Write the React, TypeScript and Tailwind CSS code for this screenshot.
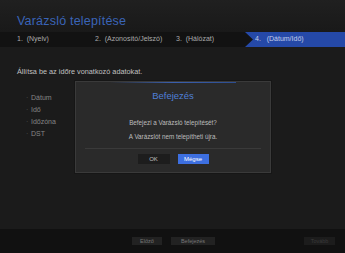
import React from "react";

export default function App() {
  const font = { fontFamily: '"Liberation Sans", Arial, sans-serif' };
  return (
    <div
      className="relative w-[345px] h-[253px] overflow-hidden bg-[#1b1b1b] flex flex-col text-[#cfcfcf]"
      style={font}
    >
      {/* header */}
      <div className="h-[32px] bg-gradient-to-b from-[#202020] to-[#191919] flex items-end pl-[17px] pb-[5px]">
        <span className="text-[12.5px] leading-none text-[#3a64b8] tracking-[0.2px]">
          Varázsló telepítése
        </span>
      </div>
      {/* steps */}
      <div className="h-[15px] bg-[#121212] flex items-stretch text-[7px] text-[#ababab]">
        <div className="w-[95px] pl-[17px] flex items-center">1.&nbsp;&nbsp;(Nyelv)</div>
        <div className="w-[81px] flex items-center">2.&nbsp;&nbsp;(Azonosító/Jelszó)</div>
        <div className="w-[69px] flex items-center">3.&nbsp;&nbsp;(Hálózat)</div>
        <div className="flex-1 bg-[#2549a8] [clip-path:polygon(0_0,100%_0,100%_100%,0_100%,8px_50%)] flex items-center pl-[10px] text-[#c3cdea]">
          4.&nbsp;&nbsp;&nbsp;(Dátum/Idő)
        </div>
      </div>
      {/* body */}
      <div className="relative flex-1 bg-[#1b1b1b]">
        <div className="pl-[17px] pt-[20px] text-[7.3px] text-[#c0c0c0]">
          Állítsa be az időre vonatkozó adatokat.
        </div>
        <ul className="pl-[26px] pt-[17px] flex flex-col gap-[4.5px] text-[7px] text-[#858585]">
          {["Dátum", "Idő", "Időzóna", "DST"].map((t) => (
            <li key={t} className="flex items-center h-[7.5px]">
              <span className="w-[5px] text-[#555]">·</span>
              {t}
            </li>
          ))}
        </ul>

        {/* modal */}
        <div className="absolute left-[75px] top-[34px] w-[196px] h-[92px] border border-[#3a3a3a] bg-[#2a2a2a] shadow-[0_0_0_1px_#161616] flex flex-col">
          <div className="h-[1px] mx-[34px] bg-gradient-to-r from-transparent via-[#3a5fae] to-[#2d4d90]" />
          <div className="text-center text-[9.5px] text-[#4f7fd6] pt-[8px] leading-none">
            Befejezés
          </div>
          <div className="flex flex-col items-center text-[6.3px] text-[#bdbdbd] pt-[19px] gap-[8px] leading-none">
            <span>Befejezi a Varázsló telepítését?</span>
            <span>A Varázslót nem telepítheti újra.</span>
          </div>
          <div className="mx-[9px] mt-[8px] h-px bg-[#3a3a3a]" />
          <div className="flex justify-center gap-[8px] pt-[5px]">
            <div className="w-[32px] h-[10px] bg-[#1d1d1d] text-[6px] text-[#c0c0c0] flex items-center justify-center">
              OK
            </div>
            <div className="w-[31px] h-[10px] bg-[#3d6fe0] text-[6px] text-white flex items-center justify-center">
              Mégse
            </div>
          </div>
        </div>
      </div>
      {/* bottom */}
      <div className="h-[24px] bg-[#111111] flex items-center pl-[132px] pr-[10px]">
        <div className="w-[30px] h-[8px] bg-[#222] text-[5.5px] text-[#777] flex items-center justify-center">
          Előző
        </div>
        <div className="ml-[9px] w-[44px] h-[8px] bg-[#222] text-[5.5px] text-[#777] flex items-center justify-center">
          Befejezés
        </div>
        <div className="ml-auto w-[31px] h-[8px] bg-[#1c1c1c] text-[5.5px] text-[#3a3a3a] flex items-center justify-center">
          Tovább
        </div>
      </div>
    </div>
  );
}
